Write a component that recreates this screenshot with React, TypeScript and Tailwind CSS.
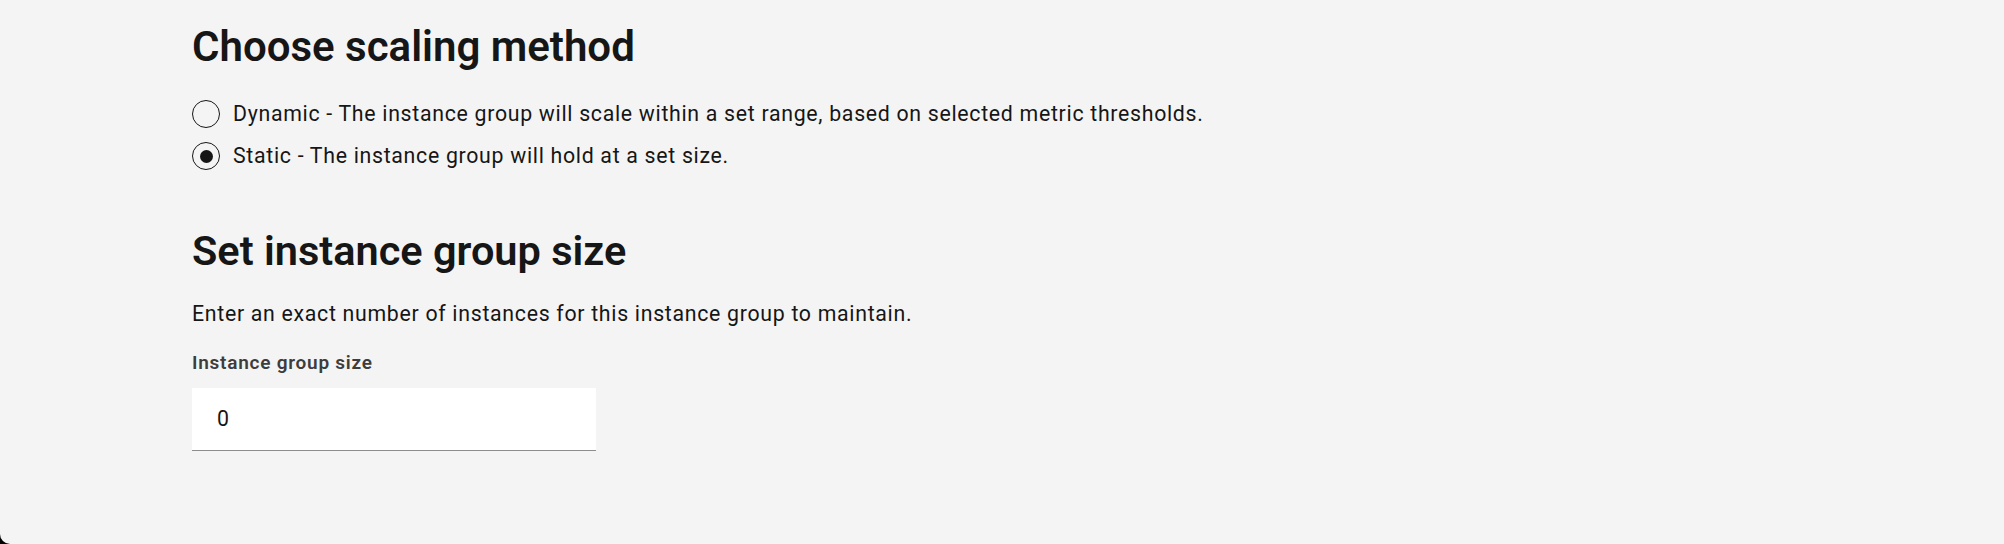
import { useState } from 'react'

const font = { fontFamily: 'Roboto, "Noto Sans", sans-serif' }

function Radio({ checked, label, onSelect }: { checked: boolean; label: string; onSelect: () => void }) {
  return (
    <label onClick={onSelect} className="flex items-center gap-[13px] h-[28px] cursor-pointer">
      <span className="flex items-center justify-center w-[28px] h-[28px] rounded-full border-[1.5px] border-[#161616] shrink-0">
        {checked && <span className="w-[13px] h-[13px] rounded-full bg-[#161616]" />}
      </span>
      <span className="text-[21.3px] leading-[28px] tracking-[0.7px] text-[#161616]">{label}</span>
    </label>
  )
}

export default function App() {
  const [method, setMethod] = useState<'dynamic' | 'static'>('static')

  return (
    <div className="w-[2004px] h-[544px] bg-black overflow-hidden" style={font}>
      <div className="h-full bg-[#f4f4f4] rounded-bl-[10px] pl-[192px] flex flex-col">
        <h2 className="mt-[20px] text-[42px] leading-[53px] font-semibold text-[#161616]">Choose scaling method</h2>

        <div className="mt-[27px] flex flex-col gap-[14px]">
          <Radio
            checked={method === 'dynamic'}
            onSelect={() => setMethod('dynamic')}
            label="Dynamic - The instance group will scale within a set range, based on selected metric thresholds."
          />
          <Radio
            checked={method === 'static'}
            onSelect={() => setMethod('static')}
            label="Static - The instance group will hold at a set size."
          />
        </div>

        <h2 className="mt-[54px] text-[41.5px] leading-[53px] font-semibold text-[#161616]">Set instance group size</h2>

        <p className="mt-[23px] text-[21.3px] leading-[28px] tracking-[0.7px] text-[#161616]">
          Enter an exact number of instances for this instance group to maintain.
        </p>

        <label className="mt-[23px] text-[19px] leading-[24px] tracking-[0.75px] font-semibold text-[#3d3d3d]">
          Instance group size
        </label>

        <div className="mt-[13px] w-[404px] h-[63px] bg-white border-b-[1.5px] border-[#8d8d8d] flex items-center pl-[25px] pr-[21px]">
          <input
            type="text"
            defaultValue="0"
            className="w-full bg-transparent outline-none text-[21.3px] text-[#161616]"
          />
        </div>
      </div>
    </div>
  )
}
